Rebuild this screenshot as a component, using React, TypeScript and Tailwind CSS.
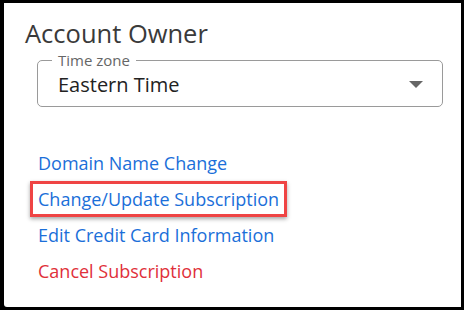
import React from "react";

export default function App() {
  return (
    <div className="w-[464px] h-[310px] bg-black pt-[3px] pl-[4px] pr-[3px] pb-[3px]" style={{ fontFamily: '"Open Sans", "Noto Sans", sans-serif' }}>
      <div className="w-full h-full bg-white rounded-bl-[3px] shadow-[0_2px_2px_rgba(0,0,0,0.35)] pl-[21px] pt-[14px] pr-[18px]">
        <div className="text-[25.5px] leading-[32px] text-[#3a3a3a]">Account Owner</div>
        <div className="relative mt-[11px] ml-[12px] h-[47px] border border-[#9a9a9a] rounded-[5px] flex items-center pl-[20px] pr-[19px]">
          <span className="absolute -top-[10px] left-[14px] bg-white px-[6px] text-[15px] leading-[18px] text-[#666]">Time zone</span>
          <span className="text-[20px] text-[#222] flex-1 pt-[2px]">Eastern Time</span>
          <svg width="14" height="7" viewBox="0 0 14 7" className="mt-[2px]">
            <path d="M0 0 L14 0 L7 7 Z" fill="#666" />
          </svg>
        </div>
        <div className="mt-[38px] ml-[13px] flex flex-col items-start text-[18px] leading-[20px]">
          <div className="text-[#1b6fd9] py-[8px]">Domain Name Change</div>
          <div className="-ml-[8px] px-[5px] py-[5px] border-[3px] border-[#ef4444] shadow-[0_2px_4px_rgba(0,0,0,0.35)] text-[#1b6fd9]">Change/Update Subscription</div>
          <div className="text-[#1b6fd9] py-[8px]">Edit Credit Card Information</div>
          <div className="text-[#e0303a] py-[8px]">Cancel Subscription</div>
        </div>
      </div>
    </div>
  );
}
